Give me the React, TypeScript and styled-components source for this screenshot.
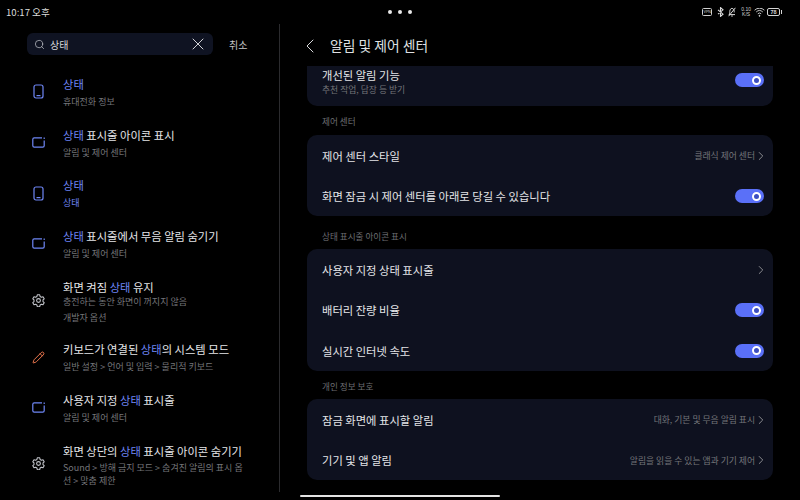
import React from 'react';
import styled, { createGlobalStyle } from 'styled-components';
import { ChevronLeft, ChevronRight, Pencil, Search, X } from 'lucide-react';

const GlobalStyle = createGlobalStyle`
  html, body {
    margin: 0;
    padding: 0;
    background: #000;
  }
  * {
    box-sizing: border-box;
  }
`;

const Screen = styled.div`
  width: 800px;
  height: 500px;
  position: relative;
  overflow: hidden;
  background: #000;
  color: #e6e7ea;
  font-family: "Noto Sans CJK KR", "Noto Sans", sans-serif;
  display: flex;
  flex-direction: column;
`;

const StatusBar = styled.div`
  height: 26px;
  flex: none;
  padding: 0 6px 2px;
  display: grid;
  grid-template-columns: 1fr auto 1fr;
  align-items: center;
  font-size: 9.6px;
  color: #dcdcdc;
`;

const Dots = styled.div`
  display: flex;
  gap: 6.3px;
`;

const Dot = styled.span`
  width: 4px;
  height: 4px;
  border-radius: 50%;
  background: #e8e8e8;
`;

const StatusIcons = styled.div`
  display: flex;
  justify-content: flex-end;
  align-items: center;
  gap: 3px;
  padding-right: 14px;
  color: #d4d4d4;
`;

const VpnBadge = styled.span`
  width: 10px;
  height: 8px;
  margin-right: 2px;
  border: 1px solid #cfcfcf;
  border-radius: 1.5px;
  font-size: 3.6px;
  line-height: 6px;
  text-align: center;
  font-family: "Liberation Sans", sans-serif;
`;

const Speed = styled.span`
  font-size: 5px;
  line-height: 5.5px;
  text-align: center;
  font-family: "Liberation Sans", sans-serif;
`;

const BatteryBody = styled.span`
  width: 13px;
  height: 8px;
  margin-left: -1px;
  border: 1px solid #d4d4d4;
  border-radius: 2px;
  font-size: 5.5px;
  font-weight: 700;
  line-height: 6px;
  text-align: center;
  font-family: "Liberation Sans", sans-serif;
  position: relative;
  &::after {
    content: "";
    position: absolute;
    right: -3px;
    top: 1px;
    width: 1px;
    height: 4px;
    background: #d4d4d4;
  }
`;

const BluetoothSvg = styled.svg`
  margin-right: 1px;
`;

const BellSvg = styled.svg`
  margin-right: 2px;
`;

const Body = styled.div`
  flex: 1;
  min-height: 0;
  display: flex;
`;

const LeftPanel = styled.div`
  width: 280px;
  flex: none;
  height: 468px;
  margin-top: -2px;
  border-right: 1px solid #2b2b2e;
  display: flex;
  flex-direction: column;
`;

const SearchRow = styled.div`
  height: 44px;
  flex: none;
  padding: 9px 0 13px 27px;
  display: flex;
  align-items: center;
`;

const SearchBox = styled.div`
  width: 186px;
  height: 22px;
  border-radius: 6px;
  background: #0f1322;
  padding: 0 7px;
  display: flex;
  align-items: center;
  color: #c9cbd0;
`;

const SearchText = styled.span`
  flex: 1;
  margin-left: 5px;
  font-size: 10px;
  color: #d8d9dc;
`;

const ClearIcon = styled(X)`
  margin-right: -2px;
`;

const CancelLabel = styled.span`
  margin-left: 16px;
  font-size: 10px;
  color: #c8c8c8;
`;

const ResultList = styled.div`
  display: flex;
  flex-direction: column;
`;

const ResultItem = styled.div`
  display: flex;
  align-items: center;
  padding: 8px 36px 8px 30px;
`;

const IconSlot = styled.div`
  width: 16px;
  margin: -3px 17px 0 0;
  flex: none;
  display: flex;
  align-items: center;
  justify-content: center;
`;

const ResultText = styled.div<{ $tight?: boolean }>`
  min-width: 0;
  margin-bottom: ${(p) => (p.$tight ? '-0.5px' : '0')};
`;

const ResultTitle = styled.div<{ $tight?: boolean }>`
  font-size: 11.3px;
  line-height: 18px;
  margin-top: -1px;
  margin-bottom: ${(p) => (p.$tight ? '-2px' : '1px')};
  color: #e4e5e8;
  white-space: nowrap;
`;

const Hit = styled.span`
  color: #6e86f5;
`;

const ResultSub = styled.div<{ $hit?: boolean; $tight?: boolean }>`
  font-size: 9px;
  line-height: ${(p) => (p.$tight ? '16px' : '16.7px')};
  color: ${(p) => (p.$hit ? '#6e86f5' : '#747579')};
`;

const WrappedSub = styled.div`
  margin-top: 1px;
  margin-bottom: 1px;
  font-size: 9px;
  line-height: 13px;
  color: #747579;
`;

const RightPanel = styled.div`
  flex: 1;
  min-width: 0;
  display: flex;
  flex-direction: column;
`;

const Header = styled.div`
  height: 40px;
  flex: none;
  padding: 0 0 0 18px;
  display: flex;
  align-items: center;
  color: #d8d9dc;
`;

const HeaderTitle = styled.span`
  margin: -2px 0 0 8px;
  font-size: 13.8px;
  color: #dfe0e3;
`;

const Scroller = styled.div`
  height: 414px;
  padding: 0 27px;
`;

const Card = styled.div<{ $clipped?: boolean }>`
  background: #0e111f;
  border-radius: ${(p) => (p.$clipped ? '0 0 10px 10px' : '10px')};
`;

const SectionLabel = styled.div<{ $pad: number; $height: number }>`
  height: ${(p) => p.$height}px;
  padding: ${(p) => p.$pad}px 0 0 15px;
  font-size: 8.6px;
  line-height: 14px;
  color: #6d6e72;
`;

const Row = styled.div`
  height: 40.5px;
  padding: 1px 9px 0 15px;
  display: flex;
  align-items: center;
  justify-content: space-between;
`;

const ClippedRow = styled(Row)`
  height: 40px;
  padding-top: 0;
  align-items: flex-start;
  overflow: hidden;
`;

const RowLabel = styled.span`
  font-size: 11.3px;
  color: #e4e5e8;
`;

const ClippedText = styled.div`
  margin-top: -2px;
  line-height: 18px;
`;

const RowSub = styled.div`
  font-size: 8.8px;
  line-height: 12px;
  color: #747579;
`;

const RowValue = styled.span`
  display: flex;
  align-items: center;
  font-size: 8.8px;
  color: #747579;
`;

const Toggle = styled.span`
  width: 29px;
  height: 14px;
  border-radius: 7px;
  background: #5a70f8;
  display: flex;
  align-items: center;
  justify-content: flex-end;
  padding-right: 3px;
`;

const ToggleKnob = styled.span`
  width: 9px;
  height: 9px;
  border-radius: 50%;
  background: #3c4ec0;
  border: 2px solid #fff;
`;

const ClippedToggle = styled(Toggle)`
  margin-top: 7px;
`;

const ChevronIcon = styled(ChevronRight)`
  margin: 0 -4px 0 -1px;
  flex: none;
`;

const HomeBar = styled.div`
  position: absolute;
  left: 300px;
  bottom: 3px;
  width: 200px;
  height: 2px;
  border-radius: 1px;
  background: #e4e4e4;
`;

const PhoneIcon = () => (
  <svg width="11" height="15" viewBox="0 0 11 15" fill="none" stroke="#6e86f5" strokeWidth="1.2">
    <rect x="1" y="1" width="9" height="13" rx="2" />
    <path d="M3.5 11.6h4" />
  </svg>
);

const TabletIcon = () => (
  <svg width="13" height="11" viewBox="0 0 13 11" fill="none" stroke="#6e86f5" strokeWidth="1.2">
    <path d="M10 .8H2.2A1.4 1.4 0 0 0 .8 2.2v6.6a1.4 1.4 0 0 0 1.4 1.4h8.6a1.4 1.4 0 0 0 1.4-1.4V3.6" />
    <path d="M12.2.6v1.4" />
  </svg>
);

const GearIcon = () => (
  <svg width="13" height="13" viewBox="0 0 24 24" fill="none" stroke="#c2c4ca" strokeWidth="2" strokeLinejoin="round">
    <path d="M9.8 1.5h4.4l.7 3 2.5 1.4 2.9-.9 2.2 3.9-2.2 2.1v2.9l2.2 2.1-2.2 3.9-2.9-.9-2.5 1.4-.7 3H9.8l-.7-3-2.5-1.4-2.9.9-2.2-3.9 2.2-2.1V10.9L1.5 8.9l2.2-3.9 2.9.9 2.5-1.4z" />
    <circle cx="12" cy="12" r="3.5" />
  </svg>
);

const BluetoothIcon = () => (
  <BluetoothSvg width="7" height="10" viewBox="0 0 7 10" fill="none" stroke="#dcdcdc" strokeWidth="1.1">
    <path d="M1 2.8l5 4.4L3.5 9.4V.6L6 2.8 1 7.2" />
  </BluetoothSvg>
);

const MutedBellIcon = () => (
  <BellSvg width="8" height="10" viewBox="0 0 8 10" fill="none" stroke="#dcdcdc" strokeWidth="1">
    <path d="M1 7.6c.8-1 .8-2 .8-3.2C1.8 2.6 2.8 1.4 4 1.4s2.2 1.2 2.2 3v1M1 7.6h6M3.2 9h1.6M.6 9.2L7.4.8" />
  </BellSvg>
);

const WifiIcon = () => (
  <svg width="11" height="9" viewBox="0 0 11 9" fill="none" stroke="#dcdcdc" strokeWidth="0.9">
    <path d="M.6 2.2a7 7 0 0 1 9.8 0M2.2 4a4.8 4.8 0 0 1 6.6 0M3.8 5.8a2.4 2.4 0 0 1 3.4 0" />
    <circle cx="5.5" cy="7.8" r="0.5" fill="#dcdcdc" />
  </svg>
);

type Result = {
  icon: React.ReactNode;
  before?: string;
  hit: string;
  after?: string;
  subs?: string[];
  subHit?: boolean;
  tight?: boolean;
  wrapped?: string;
};

const results: Result[] = [
  { icon: <PhoneIcon />, hit: '상태', subs: ['휴대전화 정보'] },
  { icon: <TabletIcon />, hit: '상태', after: ' 표시줄 아이콘 표시', subs: ['알림 및 제어 센터'] },
  { icon: <PhoneIcon />, hit: '상태', subs: ['상태'], subHit: true },
  { icon: <TabletIcon />, hit: '상태', after: ' 표시줄에서 무음 알림 숨기기', subs: ['알림 및 제어 센터'] },
  { icon: <GearIcon />, before: '화면 켜짐 ', hit: '상태', after: ' 유지', subs: ['충전하는 동안 화면이 꺼지지 않음', '개발자 옵션'], tight: true },
  { icon: <Pencil size={13} color="#f0784f" strokeWidth={1.8} />, before: '키보드가 연결된 ', hit: '상태', after: '의 시스템 모드', subs: ['일반 설정 > 언어 및 입력 > 물리적 키보드'] },
  { icon: <TabletIcon />, before: '사용자 지정 ', hit: '상태', after: ' 표시줄', subs: ['알림 및 제어 센터'] },
  { icon: <GearIcon />, before: '화면 상단의 ', hit: '상태', after: ' 표시줄 아이콘 숨기기', wrapped: 'Sound > 방해 금지 모드 > 숨겨진 알림의 표시 옵션 > 맞춤 제한' },
];

const Chevron = () => <ChevronIcon size={14} color="#8a8b8f" strokeWidth={1.7} />;

const SwitchOn = () => (
  <Toggle>
    <ToggleKnob />
  </Toggle>
);

export default function App() {
  return (
    <>
      <GlobalStyle />
      <Screen>
        <StatusBar>
          <span>10:17 오후</span>
          <Dots>
            <Dot />
            <Dot />
            <Dot />
          </Dots>
          <StatusIcons>
            <VpnBadge>VPN</VpnBadge>
            <BluetoothIcon />
            <MutedBellIcon />
            <Speed>
              0.10
              <br />
              K/S
            </Speed>
            <WifiIcon />
            <BatteryBody>78</BatteryBody>
          </StatusIcons>
        </StatusBar>
        <Body>
          <LeftPanel>
            <SearchRow>
              <SearchBox>
                <Search size={11} strokeWidth={1.5} />
                <SearchText>상태</SearchText>
                <ClearIcon size={20} strokeWidth={1.1} color="#e4e5e8" />
              </SearchBox>
              <CancelLabel>취소</CancelLabel>
            </SearchRow>
            <ResultList>
              {results.map((r, i) => (
                <ResultItem key={i}>
                  <IconSlot>{r.icon}</IconSlot>
                  <ResultText $tight={r.tight}>
                    <ResultTitle $tight={r.tight}>
                      {r.before}
                      <Hit>{r.hit}</Hit>
                      {r.after}
                    </ResultTitle>
                    {r.subs?.map((s) => (
                      <ResultSub key={s} $hit={r.subHit} $tight={r.tight}>
                        {s}
                      </ResultSub>
                    ))}
                    {r.wrapped && <WrappedSub>{r.wrapped}</WrappedSub>}
                  </ResultText>
                </ResultItem>
              ))}
            </ResultList>
          </LeftPanel>
          <RightPanel>
            <Header>
              <ChevronLeft size={24} strokeWidth={1} />
              <HeaderTitle>알림 및 제어 센터</HeaderTitle>
            </Header>
            <Scroller>
              <Card $clipped>
                <ClippedRow>
                  <ClippedText>
                    <RowLabel>개선된 알림 기능</RowLabel>
                    <RowSub>추천 작업, 답장 등 받기</RowSub>
                  </ClippedText>
                  <ClippedToggle>
                    <ToggleKnob />
                  </ClippedToggle>
                </ClippedRow>
              </Card>
              <SectionLabel $pad={8} $height={29}>제어 센터</SectionLabel>
              <Card>
                <Row>
                  <RowLabel>제어 센터 스타일</RowLabel>
                  <RowValue>
                    클래식 제어 센터
                    <Chevron />
                  </RowValue>
                </Row>
                <Row>
                  <RowLabel>화면 잠금 시 제어 센터를 아래로 당길 수 있습니다</RowLabel>
                  <SwitchOn />
                </Row>
              </Card>
              <SectionLabel $pad={13} $height={33}>상태 표시줄 아이콘 표시</SectionLabel>
              <Card>
                <Row>
                  <RowLabel>사용자 지정 상태 표시줄</RowLabel>
                  <Chevron />
                </Row>
                <Row>
                  <RowLabel>배터리 잔량 비율</RowLabel>
                  <SwitchOn />
                </Row>
                <Row>
                  <RowLabel>실시간 인터넷 속도</RowLabel>
                  <SwitchOn />
                </Row>
              </Card>
              <SectionLabel $pad={8} $height={28.5}>개인 정보 보호</SectionLabel>
              <Card>
                <Row>
                  <RowLabel>잠금 화면에 표시할 알림</RowLabel>
                  <RowValue>
                    대화, 기본 및 무음 알림 표시
                    <Chevron />
                  </RowValue>
                </Row>
                <Row>
                  <RowLabel>기기 및 앱 알림</RowLabel>
                  <RowValue>
                    알림을 읽을 수 있는 앱과 기기 제어
                    <Chevron />
                  </RowValue>
                </Row>
              </Card>
            </Scroller>
          </RightPanel>
        </Body>
        <HomeBar />
      </Screen>
    </>
  );
}
